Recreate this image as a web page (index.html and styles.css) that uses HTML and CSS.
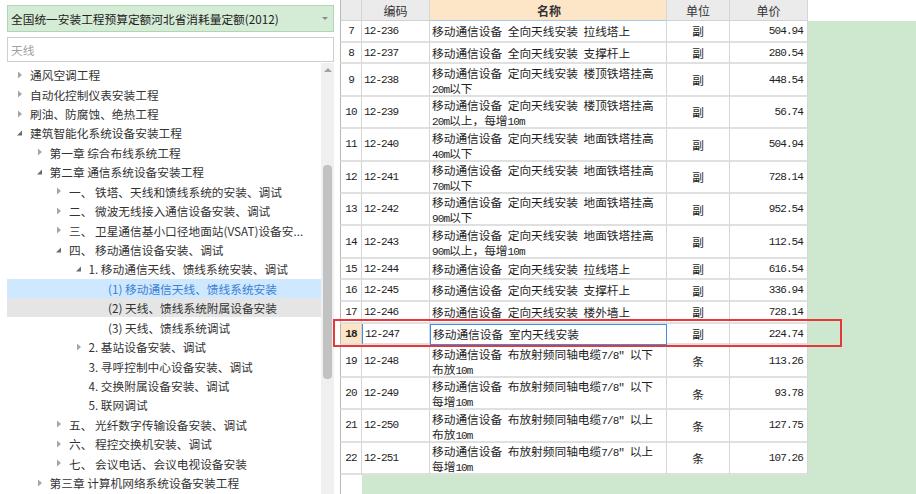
FILE: index.html
```html
<!DOCTYPE html>
<html lang="zh">
<head>
<meta charset="utf-8">
<title>定额</title>
<link rel="stylesheet" href="styles.css">
</head>
<body>
<div class="left">
  <div class="dropdown">
    <span class="dd-text">全国统一安装工程预算定额河北省消耗量定额(2012)</span>
    <span class="dd-arrow"></span>
  </div>
  <div class="search"><span class="ph">天线</span></div>
  <div class="treewrap">
    <div class="tree">
      <div class="row l0"><svg class="tg" viewBox="0 0 16 10"><path d="M4 1.5 L8 5 L4 8.5 Z" class="tc"/></svg><span>通风空调工程</span></div>
      <div class="row l0"><svg class="tg" viewBox="0 0 16 10"><path d="M4 1.5 L8 5 L4 8.5 Z" class="tc"/></svg><span>自动化控制仪表安装工程</span></div>
      <div class="row l0"><svg class="tg" viewBox="0 0 16 10"><path d="M4 1.5 L8 5 L4 8.5 Z" class="tc"/></svg><span>刷油、防腐蚀、绝热工程</span></div>
      <div class="row l0"><svg class="tg" viewBox="0 0 16 10"><path d="M8 2.5 L8 7.5 L3 7.5 Z" class="te"/></svg><span>建筑智能化系统设备安装工程</span></div>
      <div class="row l1"><svg class="tg" viewBox="0 0 16 10"><path d="M4 1.5 L8 5 L4 8.5 Z" class="tc"/></svg><span>第一章 综合布线系统工程</span></div>
      <div class="row l1"><svg class="tg" viewBox="0 0 16 10"><path d="M8 2.5 L8 7.5 L3 7.5 Z" class="te"/></svg><span>第二章 通信系统设备安装工程</span></div>
      <div class="row l2"><svg class="tg" viewBox="0 0 16 10"><path d="M4 1.5 L8 5 L4 8.5 Z" class="tc"/></svg><span>一、 铁塔、天线和馈线系统的安装、调试</span></div>
      <div class="row l2"><svg class="tg" viewBox="0 0 16 10"><path d="M4 1.5 L8 5 L4 8.5 Z" class="tc"/></svg><span>二、 微波无线接入通信设备安装、调试</span></div>
      <div class="row l2"><svg class="tg" viewBox="0 0 16 10"><path d="M4 1.5 L8 5 L4 8.5 Z" class="tc"/></svg><span>三、 卫星通信基小口径地面站(VSAT)设备安...</span></div>
      <div class="row l2"><svg class="tg" viewBox="0 0 16 10"><path d="M8 2.5 L8 7.5 L3 7.5 Z" class="te"/></svg><span>四、 移动通信设备安装、调试</span></div>
      <div class="row l3"><svg class="tg" viewBox="0 0 16 10"><path d="M8 2.5 L8 7.5 L3 7.5 Z" class="te"/></svg><span>1. 移动通信天线、馈线系统安装、调试</span></div>
      <div class="row l4 sel"><span class="tgs"></span><span>(1) 移动通信天线、馈线系统安装</span></div>
      <div class="row l4 hov"><span class="tgs"></span><span>(2) 天线、馈线系统附属设备安装</span></div>
      <div class="row l4"><span class="tgs"></span><span>(3) 天线、馈线系统调试</span></div>
      <div class="row l3"><svg class="tg" viewBox="0 0 16 10"><path d="M4 1.5 L8 5 L4 8.5 Z" class="tc"/></svg><span>2. 基站设备安装、调试</span></div>
      <div class="row l3"><span class="tgs"></span><span>3. 寻呼控制中心设备安装、调试</span></div>
      <div class="row l3"><span class="tgs"></span><span>4. 交换附属设备安装、调试</span></div>
      <div class="row l3"><span class="tgs"></span><span>5. 联网调试</span></div>
      <div class="row l2"><svg class="tg" viewBox="0 0 16 10"><path d="M4 1.5 L8 5 L4 8.5 Z" class="tc"/></svg><span>五、 光纤数字传输设备安装、调试</span></div>
      <div class="row l2"><svg class="tg" viewBox="0 0 16 10"><path d="M4 1.5 L8 5 L4 8.5 Z" class="tc"/></svg><span>六、 程控交换机安装、调试</span></div>
      <div class="row l2"><svg class="tg" viewBox="0 0 16 10"><path d="M4 1.5 L8 5 L4 8.5 Z" class="tc"/></svg><span>七、 会议电话、会议电视设备安装</span></div>
      <div class="row l1"><svg class="tg" viewBox="0 0 16 10"><path d="M4 1.5 L8 5 L4 8.5 Z" class="tc"/></svg><span>第三章 计算机网络系统设备安装工程</span></div>
    </div>
    <div class="scrollbar">
      <svg class="sb-up" viewBox="0 0 8 5"><path d="M0 5 L4 1 L8 5 Z"/></svg>
      <span class="sb-thumb"></span>
    </div>
  </div>
</div>

<div class="right">
  <div class="hdr">
    <div class="c rn"></div>
    <div class="c code">编码</div>
    <div class="c name">名称</div>
    <div class="c unit">单位</div>
    <div class="c price">单价</div>
    <div class="hfill"></div>
  </div>

  <div class="tr s"><div class="c rn"><span class="a">7</span></div><div class="c code"><span class="a">12-236</span></div><div class="c name">移动通信设备 全向天线安装 拉线塔上</div><div class="c unit">副</div><div class="c price"><span class="a">504.94</span></div></div>
  <div class="tr s"><div class="c rn"><span class="a">8</span></div><div class="c code"><span class="a">12-237</span></div><div class="c name">移动通信设备 全向天线安装 支撑杆上</div><div class="c unit">副</div><div class="c price"><span class="a">280.54</span></div></div>
  <div class="tr d"><div class="c rn"><span class="a">9</span></div><div class="c code"><span class="a">12-238</span></div><div class="c name">移动通信设备 定向天线安装 楼顶铁塔挂高<br><span class="a">20m</span>以下</div><div class="c unit">副</div><div class="c price"><span class="a">448.54</span></div></div>
  <div class="tr d"><div class="c rn"><span class="a">10</span></div><div class="c code"><span class="a">12-239</span></div><div class="c name">移动通信设备 定向天线安装 楼顶铁塔挂高<br><span class="a">20m</span>以上，每增<span class="a">10m</span></div><div class="c unit">副</div><div class="c price"><span class="a">56.74</span></div></div>
  <div class="tr d"><div class="c rn"><span class="a">11</span></div><div class="c code"><span class="a">12-240</span></div><div class="c name">移动通信设备 定向天线安装 地面铁塔挂高<br><span class="a">40m</span>以下</div><div class="c unit">副</div><div class="c price"><span class="a">504.94</span></div></div>
  <div class="tr d"><div class="c rn"><span class="a">12</span></div><div class="c code"><span class="a">12-241</span></div><div class="c name">移动通信设备 定向天线安装 地面铁塔挂高<br><span class="a">70m</span>以下</div><div class="c unit">副</div><div class="c price"><span class="a">728.14</span></div></div>
  <div class="tr d"><div class="c rn"><span class="a">13</span></div><div class="c code"><span class="a">12-242</span></div><div class="c name">移动通信设备 定向天线安装 地面铁塔挂高<br><span class="a">90m</span>以下</div><div class="c unit">副</div><div class="c price"><span class="a">952.54</span></div></div>
  <div class="tr d"><div class="c rn"><span class="a">14</span></div><div class="c code"><span class="a">12-243</span></div><div class="c name">移动通信设备 定向天线安装 地面铁塔挂高<br><span class="a">90m</span>以上，每增<span class="a">10m</span></div><div class="c unit">副</div><div class="c price"><span class="a">112.54</span></div></div>
  <div class="tr s"><div class="c rn"><span class="a">15</span></div><div class="c code"><span class="a">12-244</span></div><div class="c name">移动通信设备 定向天线安装 拉线塔上</div><div class="c unit">副</div><div class="c price"><span class="a">616.54</span></div></div>
  <div class="tr s"><div class="c rn"><span class="a">16</span></div><div class="c code"><span class="a">12-245</span></div><div class="c name">移动通信设备 定向天线安装 支撑杆上</div><div class="c unit">副</div><div class="c price"><span class="a">336.94</span></div></div>
  <div class="tr s"><div class="c rn"><span class="a">17</span></div><div class="c code"><span class="a">12-246</span></div><div class="c name">移动通信设备 定向天线安装 楼外墙上</div><div class="c unit">副</div><div class="c price"><span class="a">728.14</span></div></div>
  <div class="tr s cur"><div class="c rn"><span class="a">18</span></div><div class="c code"><span class="a">12-247</span></div><div class="c name">移动通信设备 室内天线安装</div><div class="c unit">副</div><div class="c price"><span class="a">224.74</span></div></div>
  <div class="tr d"><div class="c rn"><span class="a">19</span></div><div class="c code"><span class="a">12-248</span></div><div class="c name">移动通信设备 布放射频同轴电缆<span class="a">7/8″</span> 以下<br>布放<span class="a">10m</span></div><div class="c unit">条</div><div class="c price"><span class="a">113.26</span></div></div>
  <div class="tr d"><div class="c rn"><span class="a">20</span></div><div class="c code"><span class="a">12-249</span></div><div class="c name">移动通信设备 布放射频同轴电缆<span class="a">7/8″</span> 以下<br>每增<span class="a">10m</span></div><div class="c unit">条</div><div class="c price"><span class="a">93.78</span></div></div>
  <div class="tr d"><div class="c rn"><span class="a">21</span></div><div class="c code"><span class="a">12-250</span></div><div class="c name">移动通信设备 布放射频同轴电缆<span class="a">7/8″</span> 以上<br>布放<span class="a">10m</span></div><div class="c unit">条</div><div class="c price"><span class="a">127.75</span></div></div>
  <div class="tr d"><div class="c rn"><span class="a">22</span></div><div class="c code"><span class="a">12-251</span></div><div class="c name">移动通信设备 布放射频同轴电缆<span class="a">7/8″</span> 以上<br>每增<span class="a">10m</span></div><div class="c unit">条</div><div class="c price"><span class="a">107.26</span></div></div>

  <div class="bfill"><div class="rnfill"></div></div>
</div>

<div class="redbox"></div>
</body>
</html>
```

FILE: styles.css
```css
html, body {
  margin: 0;
  padding: 0;
}
body {
  width: 916px;
  height: 494px;
  overflow: hidden;
  display: flex;
  background: #ffffff;
  font-family: "Noto Sans CJK SC", "Noto Sans", sans-serif;
  color: #333333;
  position: relative;
}

/* ---------- left panel ---------- */
.left {
  width: 334px;
  padding-left: 7px;
  box-sizing: border-box;
  display: flex;
  flex-direction: column;
  height: 494px;
}
.dropdown {
  margin-top: 5px;
  height: 27px;
  box-sizing: border-box;
  border: 1px solid #b2d6b4;
  background: #d4ebd5;
  display: flex;
  align-items: center;
  padding: 0 5px 0 3px;
  font-size: 11.7px;
  color: #222;
}
.dd-text { flex: 1; white-space: nowrap; }
.dd-arrow {
  width: 0; height: 0;
  border-left: 3px solid transparent;
  border-right: 3px solid transparent;
  border-top: 3px solid #8a8a8a;
}
.search {
  margin-top: 5px;
  height: 25px;
  box-sizing: border-box;
  border: 1px solid #cfcfcf;
  display: flex;
  align-items: center;
  padding-left: 3px;
  font-size: 11.7px;
}
.ph { color: #a0a0a0; }

.treewrap {
  flex: 1;
  display: flex;
  min-height: 0;
  margin-top: 1px;
}
.tree {
  flex: 1;
  overflow: hidden;
  padding-top: 2px;
}
.row {
  height: 19.43px;
  display: flex;
  align-items: center;
  font-size: 11.7px;
  color: #333;
  white-space: nowrap;
}
.row.l0 { padding-left: 7px; }
.row.l1 { padding-left: 26.5px; }
.row.l2 { padding-left: 46px; }
.row.l3 { padding-left: 65.5px; }
.row.l4 { padding-left: 85px; }
.row.sel { background: #cde8ff; color: #3d7fd0; }
.row.hov { background: #e5e5e5; }

.tg {
  width: 16px;
  height: 10px;
  flex: none;
}
.tgs {
  width: 16px;
  flex: none;
}
.tc { fill: #a6a6a6; }
.te { fill: #6b6b6b; }

.scrollbar {
  width: 13px;
  background: #f0f0f0;
  display: flex;
  flex-direction: column;
  align-items: center;
}
.sb-up {
  margin-top: 4px;
  width: 8px;
  height: 5px;
  fill: #a3a3a3;
}
.sb-thumb {
  margin-top: 93px;
  width: 9px;
  height: 214px;
  border-radius: 4px;
  background: #c2c2c2;
}

/* ---------- right grid ---------- */
.right {
  margin-left: 6px;
  flex: 1;
  display: flex;
  flex-direction: column;
  background: #cde8cf;
  height: 494px;
}
.hdr {
  display: flex;
  height: 21px;
  background: #ffffff;
  flex: none;
}
.tr {
  display: flex;
  width: 468px;
  background: #ffffff;
  flex: none;
}
.tr.s { height: 21.7px; }
.tr.d { height: 32.4px; }

.c {
  box-sizing: border-box;
  border-right: 1px solid #d6d6d6;
  border-bottom: 2px solid #e0e0e0;
  display: flex;
  align-items: center;
  font-size: 11.7px;
  color: #1e1e1e;
  white-space: nowrap;
  overflow: hidden;
}
.rn { width: 22px; justify-content: center; border-left: 1px solid #b8b8b8; }
.code { width: 68px; padding-left: 2px; }
.name { width: 237px; padding-left: 2px; }
.unit { width: 63px; justify-content: center; }
.price { width: 78px; justify-content: flex-end; padding-right: 4px; }

.tr .name {
  display: block;
  line-height: 14px;
  padding-top: 3px;
  word-spacing: 3px;
}
.tr.d .name { padding-top: 0.5px; line-height: 15px; }
.name .a { line-height: 0; }

.hdr .c {
  background: #ebebeb;
  border-bottom: 1px solid #d2d2d2;
  justify-content: center;
  font-size: 12px;
  color: #333;
}
.hdr .code { padding-left: 0; }
.hdr .name {
  background: #fde6c8;
  font-weight: bold;
  border-bottom: 1px solid #a9c7e6;
}
.hdr .price { padding-right: 0; }
.hfill { flex: 1; }

.a {
  font-family: "Liberation Mono", "DejaVu Sans Mono", monospace;
  font-size: 11px;
  letter-spacing: -0.9px;
  word-spacing: 0;
}

.tr.cur .rn { background: #fde4c4; font-weight: bold; }
.tr.cur .code { border-left: 1px solid #3d8ee6; }
.tr.cur .name { border: 1px solid #3d8ee6; padding-top: 2px; }

.bfill {
  flex: 1;
  display: flex;
}
.rnfill {
  width: 22px;
  box-sizing: border-box;
  background: #ffffff;
  border-left: 1px solid #b8b8b8;
}

.redbox {
  position: absolute;
  left: 333px;
  top: 319px;
  width: 509px;
  height: 28px;
  box-sizing: border-box;
  border: 2px solid #e8373a;
}
```
